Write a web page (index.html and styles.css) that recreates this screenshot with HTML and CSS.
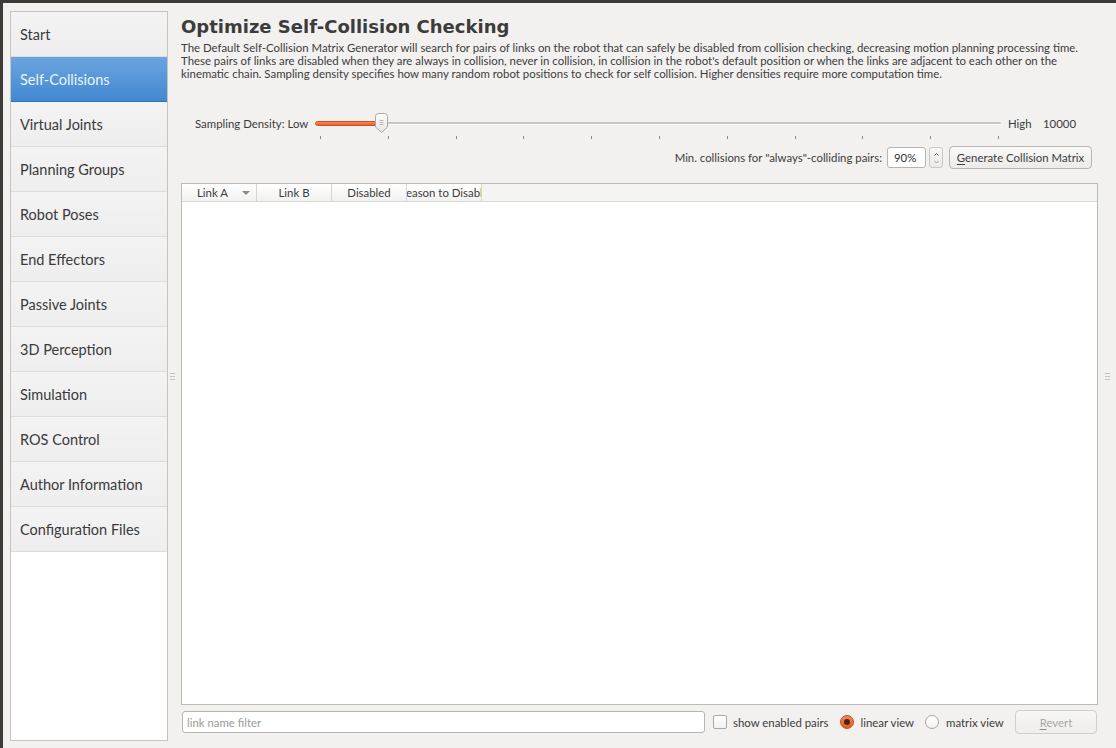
FILE: index.html
```html
<!DOCTYPE html>
<html>
<head>
<meta charset="utf-8">
<link rel="stylesheet" href="styles.css">
</head>
<body>
<div class="window">
  <aside class="nav">
    <div class="nav-item">Start</div>
    <div class="nav-item active">Self-Collisions</div>
    <div class="nav-item">Virtual Joints</div>
    <div class="nav-item">Planning Groups</div>
    <div class="nav-item">Robot Poses</div>
    <div class="nav-item">End Effectors</div>
    <div class="nav-item">Passive Joints</div>
    <div class="nav-item">3D Perception</div>
    <div class="nav-item">Simulation</div>
    <div class="nav-item">ROS Control</div>
    <div class="nav-item">Author Information</div>
    <div class="nav-item">Configuration Files</div>
    <div class="nav-fill"></div>
  </aside>
  <div class="splitter"><span class="grip"><i></i><i></i><i></i></span></div>
  <main class="page">
    <h1 class="title">Optimize Self-Collision Checking</h1>
    <p class="desc">The Default Self-Collision Matrix Generator will search for pairs of links on the robot that can safely be disabled from collision checking, decreasing motion planning processing time.<br>These pairs of links are disabled when they are always in collision, never in collision, in collision in the robot's default position or when the links are adjacent to each other on the<br>kinematic chain. Sampling density specifies how many random robot positions to check for self collision. Higher densities require more computation time.</p>

    <div class="slider-row">
      <span class="slider-label">Sampling Density: Low</span>
      <div class="slider">
        <div class="track">
          <div class="track-fill"></div>
          <div class="track-rest"></div>
        </div>
        <svg class="handle" width="13" height="20" viewBox="0 0 13 20">
          <defs>
            <linearGradient id="hg" x1="0" y1="0" x2="0" y2="1">
              <stop offset="0" stop-color="#fdfdfd"/>
              <stop offset="1" stop-color="#e6e5e4"/>
            </linearGradient>
          </defs>
          <path d="M3.5 0.5 H9.5 Q12.5 0.5 12.5 3.5 V14 L6.5 19.5 L0.5 14 V3.5 Q0.5 0.5 3.5 0.5 Z" fill="url(#hg)" stroke="#a9a7a4"/>
          <path d="M4.5 7.5 H8.5 M4.5 9.5 H8.5 M4.5 11.5 H8.5" stroke="#b8b6b3" stroke-width="1"/>
        </svg>
        <div class="ticks">
          <i></i><i></i><i></i><i></i><i></i><i></i><i></i><i></i><i></i><i></i><i></i>
        </div>
      </div>
      <span class="slider-high">High</span>
      <span class="slider-value">10000</span>
    </div>

    <div class="spin-row">
      <span class="spin-label">Min. collisions for "always"-colliding pairs:</span>
      <div class="spinbox">
        <span class="spin-text">90%</span>
        <span class="spin-arrows">
          <svg width="7" height="14" viewBox="0 0 7 14"><path d="M1.5 4.5 L3.5 2.5 L5.5 4.5" fill="none" stroke="#5c5c5c" stroke-width="1"/><path d="M1.5 10 L3.5 12 L5.5 10" fill="none" stroke="#9a9a9a" stroke-width="1"/></svg>
        </span>
      </div>
      <button class="btn gen"><u>G</u>enerate Collision Matrix</button>
    </div>

    <div class="table">
      <div class="thead">
        <div class="th th-a">Link A<span class="sort"></span></div>
        <div class="th">Link B</div>
        <div class="th">Disabled</div>
        <div class="th th-clip"><span>Reason to Disable</span></div>
        <div class="th-fill"></div>
      </div>
      <div class="tbody"></div>
    </div>

    <div class="bottom-row">
      <div class="filter">link name filter</div>
      <label class="check"><span class="box"></span>show enabled pairs</label>
      <label class="radio"><span class="dot on"></span>linear view</label>
      <label class="radio"><span class="dot"></span>matrix view</label>
      <button class="btn revert" disabled><u>R</u>evert</button>
    </div>
  </main>
  <div class="splitter right"><span class="grip"><i></i><i></i><i></i></span></div>
</div>
</body>
</html>
```

FILE: styles.css
```css
* { box-sizing: border-box; }
html, body { margin: 0; padding: 0; }
body {
  background: #3c3b37;
  font-family: Lato, "Noto Sans", "Liberation Sans", sans-serif;
  color: #3c3c3c;
}
.window {
  width: 1116px;
  height: 748px;
  background: #f2f1f0;
  border-top: 3px solid #3c3b37;
  border-left: 3px solid #3c3b37;
  padding: 8px 0 7px 7px;
  display: flex;
}
.nav {
  width: 158px;
  border: 1px solid #c6c4c1;
  background: #ffffff;
  display: flex;
  flex-direction: column;
}
.nav-item {
  height: 45px;
  flex: none;
  display: flex;
  align-items: center;
  padding-left: 9px;
  font-size: 14.5px;
  color: #3a3a3a;
  background: linear-gradient(#f3f3f3, #eeeeee);
  border-bottom: 1px solid #dddcdb;
}
.nav-item.active {
  background: linear-gradient(#6ba4de, #4288d2);
  color: #edf3fa;
  border-bottom: 1px solid #2f70b8;
}
.nav-fill { flex: 1; background: #fff; }

.splitter {
  width: 13px;
  display: flex;
  align-items: center;
  justify-content: flex-start;
}
.splitter.right { width: 18px; justify-content: center; }
.grip {
  display: flex;
  flex-direction: column;
  gap: 2px;
  margin-left: 2px;
}
.splitter.right .grip { margin-left: 0; }
.grip i {
  display: block;
  width: 5px;
  height: 1px;
  background: #c4c2bf;
}

.page {
  width: 917px;
  display: flex;
  flex-direction: column;
}
.title {
  margin: 5px 0 0 0;
  font-family: "DejaVu Sans", sans-serif;
  font-weight: bold;
  font-size: 18px;
  line-height: 22px;
  color: #3c3c3c;
  white-space: nowrap;
}
.desc {
  margin: 3px 0 0 0;
  font-size: 11.4px;
  line-height: 13px;
  white-space: nowrap;
  color: #3c3c3c;
}

.slider-row {
  margin-top: 33px;
  height: 20px;
  display: flex;
  align-items: center;
  padding-left: 14px;
  font-size: 11.4px;
}
.slider-label { width: 120px; flex: none; }
.slider {
  position: relative;
  width: 686px;
  height: 20px;
  flex: none;
}
.track {
  position: absolute;
  left: 0;
  right: 0;
  top: 8px;
  height: 5px;
  display: flex;
  align-items: center;
}
.track-fill {
  width: 66px;
  height: 5px;
  border-radius: 3px;
  background: linear-gradient(#f48a5c, #e9602b);
  border: 1px solid #cc531f;
}
.track-rest {
  flex: 1;
  height: 3px;
  background: #c9c7c4;
  border-bottom: 1px solid #fdfdfd;
  border-radius: 0 2px 2px 0;
}
.handle {
  position: absolute;
  left: 60px;
  top: 0;
}
.ticks {
  position: absolute;
  left: 5px;
  right: 2px;
  top: 23px;
  display: flex;
  justify-content: space-between;
}
.ticks i {
  display: block;
  width: 1px;
  height: 3px;
  background: #8c8a87;
}
.slider-high { margin-left: 7px; width: 35px; flex: none; }
.slider-value { flex: none; }

.spin-row {
  margin-top: 13px;
  height: 23px;
  display: flex;
  align-items: center;
  justify-content: flex-end;
  padding-right: 6px;
  font-size: 11.4px;
}
.spin-label { margin-right: 5px; }
.spinbox {
  width: 56px;
  height: 21px;
  display: flex;
  align-items: stretch;
  margin-right: 6px;
}
.spin-text {
  flex: 1;
  background: #fff;
  border: 1px solid #b7b5b2;
  border-radius: 3px;
  padding-left: 6px;
  display: flex;
  align-items: center;
  font-size: 11.4px;
  color: #333;
}
.spin-arrows {
  width: 14px;
  margin-left: 3px;
  border: 1px solid #c9c7c4;
  border-radius: 3px;
  background: linear-gradient(#f7f7f6, #ebeae9);
  display: flex;
  align-items: center;
  justify-content: center;
}
.btn {
  font-family: inherit;
  font-size: 11.4px;
  color: #3c3c3c;
  background: linear-gradient(#f9f9f8, #ecebea);
  border: 1px solid #b7b4b1;
  border-radius: 4px;
  padding: 0 6px;
  height: 23px;
  white-space: nowrap;
}
.btn u { text-decoration: underline; text-underline-offset: 2px; }
.gen { width: 143px; }

.table {
  margin-top: 14px;
  flex: 1;
  border: 1px solid #bdbbb8;
  background: #fff;
  display: flex;
  flex-direction: column;
}
.thead {
  height: 18px;
  display: flex;
  border-bottom: 1px solid #d9d8d6;
  background: #f4f4f3;
}
.th {
  width: 75px;
  height: 17px;
  flex: none;
  display: flex;
  align-items: center;
  justify-content: center;
  font-size: 11.4px;
  color: #3c3c3c;
  background: linear-gradient(#ffffff, #f1f1f0);
  border-right: 1px solid #d6d5d3;
  white-space: nowrap;
  overflow: hidden;
  position: relative;
}
.th-a { width: 75px; justify-content: flex-start; padding-left: 15px; }
.sort {
  position: absolute;
  right: 6px;
  top: 7px;
  width: 0;
  height: 0;
  border-left: 4px solid transparent;
  border-right: 4px solid transparent;
  border-top: 4px solid #8a8a8a;
}
.th-clip { width: 75px; }
.th-clip span { flex: none; }
.th-fill { flex: 1; }
.tbody { flex: 1; background: #fff; }

.bottom-row {
  height: 26px;
  margin-top: 4px;
  margin-bottom: 6px;
  display: flex;
  align-items: center;
  font-size: 11.4px;
}
.filter {
  margin-left: 1px;
  width: 523px;
  height: 22px;
  background: #fff;
  border: 1px solid #b7b5b2;
  border-radius: 3px;
  padding-left: 4px;
  display: flex;
  align-items: center;
  color: #9b9a98;
  font-size: 11.4px;
}
.check, .radio {
  display: flex;
  align-items: center;
  color: #3c3c3c;
  white-space: nowrap;
}
.check { margin-left: 8px; }
.box {
  width: 14px;
  height: 14px;
  border: 1px solid #a9a7a4;
  border-radius: 2px;
  background: linear-gradient(#ffffff, #f2f2f2);
  margin-right: 6px;
}
.radio { margin-left: 11px; }
.radio + .radio { margin-left: 11px; }
.dot {
  width: 14px;
  height: 14px;
  border-radius: 50%;
  border: 1px solid #a9a7a4;
  background: linear-gradient(#ffffff, #f2f2f2);
  margin-right: 7px;
  position: relative;
}
.dot.on {
  background: linear-gradient(#f38759, #e35b25);
  border-color: #c14d1b;
}
.dot.on::after {
  content: "";
  position: absolute;
  left: 3px;
  top: 3px;
  width: 6px;
  height: 6px;
  border-radius: 50%;
  background: #4a2414;
}
.revert {
  margin-left: auto;
  margin-right: 1px;
  width: 82px;
  height: 24px;
  color: #a8a7a5;
  background: linear-gradient(#f6f6f5, #efeeed);
  border-color: #d0cecb;
}
.revert u { text-decoration-color: #8a8987; }
```
